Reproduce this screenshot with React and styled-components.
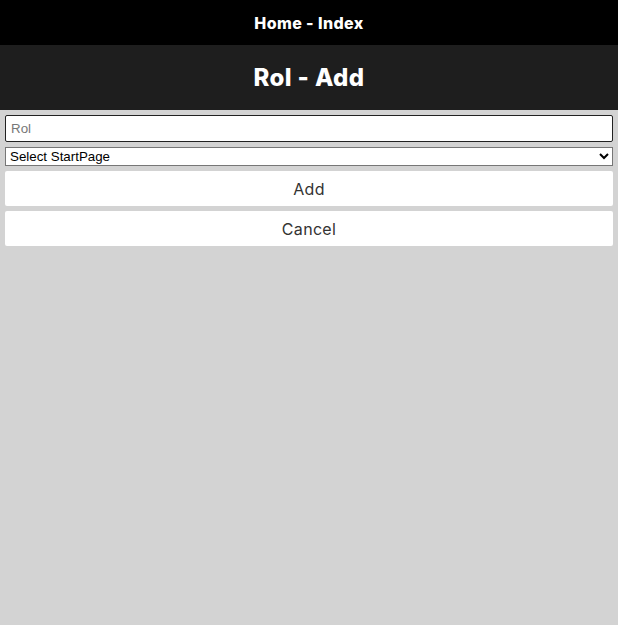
import React from 'react';
import styled, {createGlobalStyle} from 'styled-components';

const GlobalStyle = createGlobalStyle`
  html, body {
    margin: 0;
    padding: 0;
    background: #d3d3d3;
  }
  * { box-sizing: border-box; }
`;

const Page = styled.div`
  min-height: 625px;
  background: #d3d3d3;
  font-family: "Inter", "Liberation Sans", sans-serif;
`;

const NavBar = styled.nav`
  height: 45px;
  background: #000;
  display: flex;
  align-items: center;
  justify-content: center;
  a {
    color: #fff;
    font-weight: 800;
    font-size: 16px;
    text-decoration: none;
    letter-spacing: 0.4px;
  }
`;

const TitleBar = styled.header`
  height: 65px;
  background: #1e1e1e;
  display: flex;
  align-items: center;
  justify-content: center;
  h1 {
    margin: 0;
    color: #fff;
    font-size: 24px;
    font-weight: 800;
    letter-spacing: 0.4px;
  }
`;

const Form = styled.form`
  display: flex;
  flex-direction: column;
  gap: 5px;
  padding: 5px;
`;

const TextInput = styled.input`
  height: 27px;
  width: 100%;
  border: 1px solid #222;
  border-radius: 2px;
  padding: 1px 5px;
  font-family: "Liberation Sans", Arial, sans-serif;
  font-size: 13.33px;
  background: #fff;
  &::placeholder { color: #777; }
`;

const Select = styled.select`
  height: 19px;
  width: 100%;
  font-family: "Liberation Sans", Arial, sans-serif;
  font-size: 13.33px;
  color: #000;
  background: #fff;
  border: 1px solid #767676;
  border-radius: 0;
`;

const Button = styled.button`
  height: 35px;
  width: 100%;
  border: none;
  border-radius: 2px;
  background: #fff;
  color: #333;
  font-family: "Inter", "Liberation Sans", sans-serif;
  font-size: 16px;
  font-weight: 400;
  letter-spacing: 0.3px;
  cursor: pointer;
`;

export default function App() {
  return (
    <Page>
      <GlobalStyle />
      <NavBar>
        <a href="#">Home - Index</a>
      </NavBar>
      <TitleBar>
        <h1>Rol - Add</h1>
      </TitleBar>
      <Form onSubmit={e => e.preventDefault()}>
        <TextInput placeholder="Rol" />
        <Select defaultValue="">
          <option value="">Select StartPage</option>
        </Select>
        <Button type="submit">Add</Button>
        <Button type="button">Cancel</Button>
      </Form>
    </Page>
  );
}
